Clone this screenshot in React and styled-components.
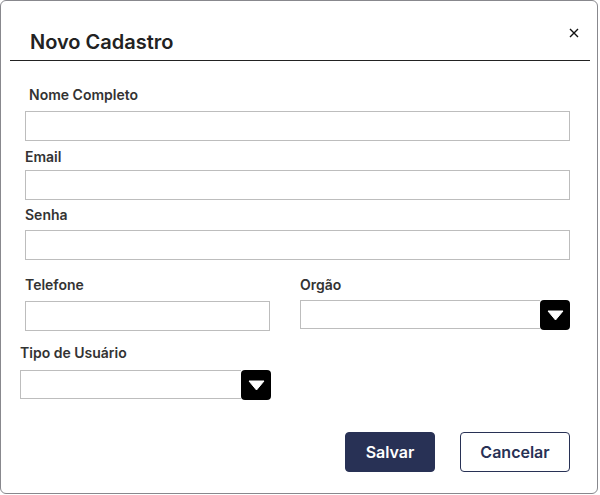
import React from 'react'
import styled, { createGlobalStyle } from 'styled-components'

const GlobalStyle = createGlobalStyle`
    body {
        margin: 0;
        background: #fff;
        font-family: Inter, 'Noto Sans', sans-serif;
    }
`

const Dialog = styled.div`
    box-sizing: border-box;
    width: 598px;
    height: 494px;
    border: 1px solid #88888d;
    border-radius: 6px;
    background: #fff;
    display: flex;
    flex-direction: column;
`

const Header = styled.div`
    display: flex;
    justify-content: space-between;
    align-items: flex-start;
    margin: 0 7px 0 9px;
    padding: 29px 10px 6px 20px;
    border-bottom: 1px solid #222;
`

const Title = styled.h2`
    margin: 0;
    font-size: 20px;
    line-height: 24px;
    font-weight: 600;
    color: #222;
`

const Close = styled.button`
    display: flex;
    align-items: center;
    justify-content: center;
    width: 12px;
    height: 12px;
    margin-top: -3px;
    padding: 0;
    border: none;
    background: none;
    cursor: pointer;
`

const Body = styled.form`
    display: flex;
    flex-direction: column;
    padding: 25px 27px 0 24px;
`

const Field = styled.div`
    display: flex;
    flex-direction: column;
    margin-top: ${(p) => p.$top || 0}px;
    margin-left: ${(p) => p.$shift || 0}px;
    width: ${(p) => (p.$width ? `${p.$width}px` : 'auto')};
`

const Label = styled.label`
    font-size: 14px;
    line-height: 17px;
    font-weight: 600;
    color: #333;
    margin-bottom: ${(p) => p.$gap}px;
    padding-left: ${(p) => p.$indent || 0}px;
`

const Input = styled.input`
    box-sizing: border-box;
    width: 100%;
    height: 30px;
    border: 1px solid #bdbdbd;
    border-radius: 0;
    padding: 0 8px;
    font-family: inherit;
    font-size: 14px;
    outline: none;
`

const Row = styled.div`
    display: flex;
    gap: 30px;
    margin-top: ${(p) => p.$top}px;
`

const SelectWrap = styled.div`
    display: flex;
    height: 30px;
`

const SelectField = styled.div`
    flex: 1;
    box-sizing: border-box;
    height: 29px;
    border: 1px solid #bdbdbd;
    border-right: none;
`

const Arrow = styled.button`
    width: 30px;
    height: 30px;
    padding: 0;
    border: none;
    border-radius: 4px;
    background: #000;
    display: flex;
    align-items: center;
    justify-content: center;
    cursor: pointer;
`

const Actions = styled.div`
    display: flex;
    justify-content: flex-end;
    gap: 25px;
    margin-top: 32px;
`

const Button = styled.button`
    box-sizing: border-box;
    width: ${(p) => p.$width}px;
    height: 40px;
    border-radius: 4px;
    border: 1px solid #283155;
    background: ${(p) => (p.$primary ? '#283155' : '#fff')};
    color: ${(p) => (p.$primary ? '#fff' : '#283155')};
    font-family: inherit;
    font-size: 16px;
    font-weight: 600;
    cursor: pointer;
`

const Select = () => (
    <SelectWrap>
        <SelectField />
        <Arrow type="button">
            <svg width="17" height="11" viewBox="0 0 17 11">
                <path d="M1 1 L16 1 L8.5 10 Z" fill="#fff" stroke="#fff" strokeWidth="1" strokeLinejoin="round" />
            </svg>
        </Arrow>
    </SelectWrap>
)

const App = () => {
    return (
        <>
            <GlobalStyle />
            <Dialog>
                <Header>
                    <Title>Novo Cadastro</Title>
                    <Close type="button" aria-label="Fechar">
                        <svg width="10" height="10" viewBox="0 0 10 10">
                            <path d="M1 1 L9 9 M9 1 L1 9" stroke="#111" strokeWidth="1.4" />
                        </svg>
                    </Close>
                </Header>
                <Body onSubmit={(e) => e.preventDefault()}>
                    <Field>
                        <Label $gap={8} $indent={4}>Nome Completo</Label>
                        <Input type="text" />
                    </Field>
                    <Field $top={7}>
                        <Label $gap={5}>Email</Label>
                        <Input type="email" />
                    </Field>
                    <Field $top={6}>
                        <Label $gap={7}>Senha</Label>
                        <Input type="password" />
                    </Field>
                    <Row $top={16}>
                        <Field $width={246}>
                            <Label $gap={8}>Telefone</Label>
                            <Input type="text" />
                        </Field>
                        <Field $width={271}>
                            <Label $gap={7}>Orgão</Label>
                            <Select />
                        </Field>
                    </Row>
                    <Field $top={13} $shift={-5} $width={251}>
                        <Label $gap={9}>Tipo de Usuário</Label>
                        <Select />
                    </Field>
                    <Actions>
                        <Button type="submit" $primary $width={90}>Salvar</Button>
                        <Button type="button" $width={110}>Cancelar</Button>
                    </Actions>
                </Body>
            </Dialog>
        </>
    )
}

export default App
